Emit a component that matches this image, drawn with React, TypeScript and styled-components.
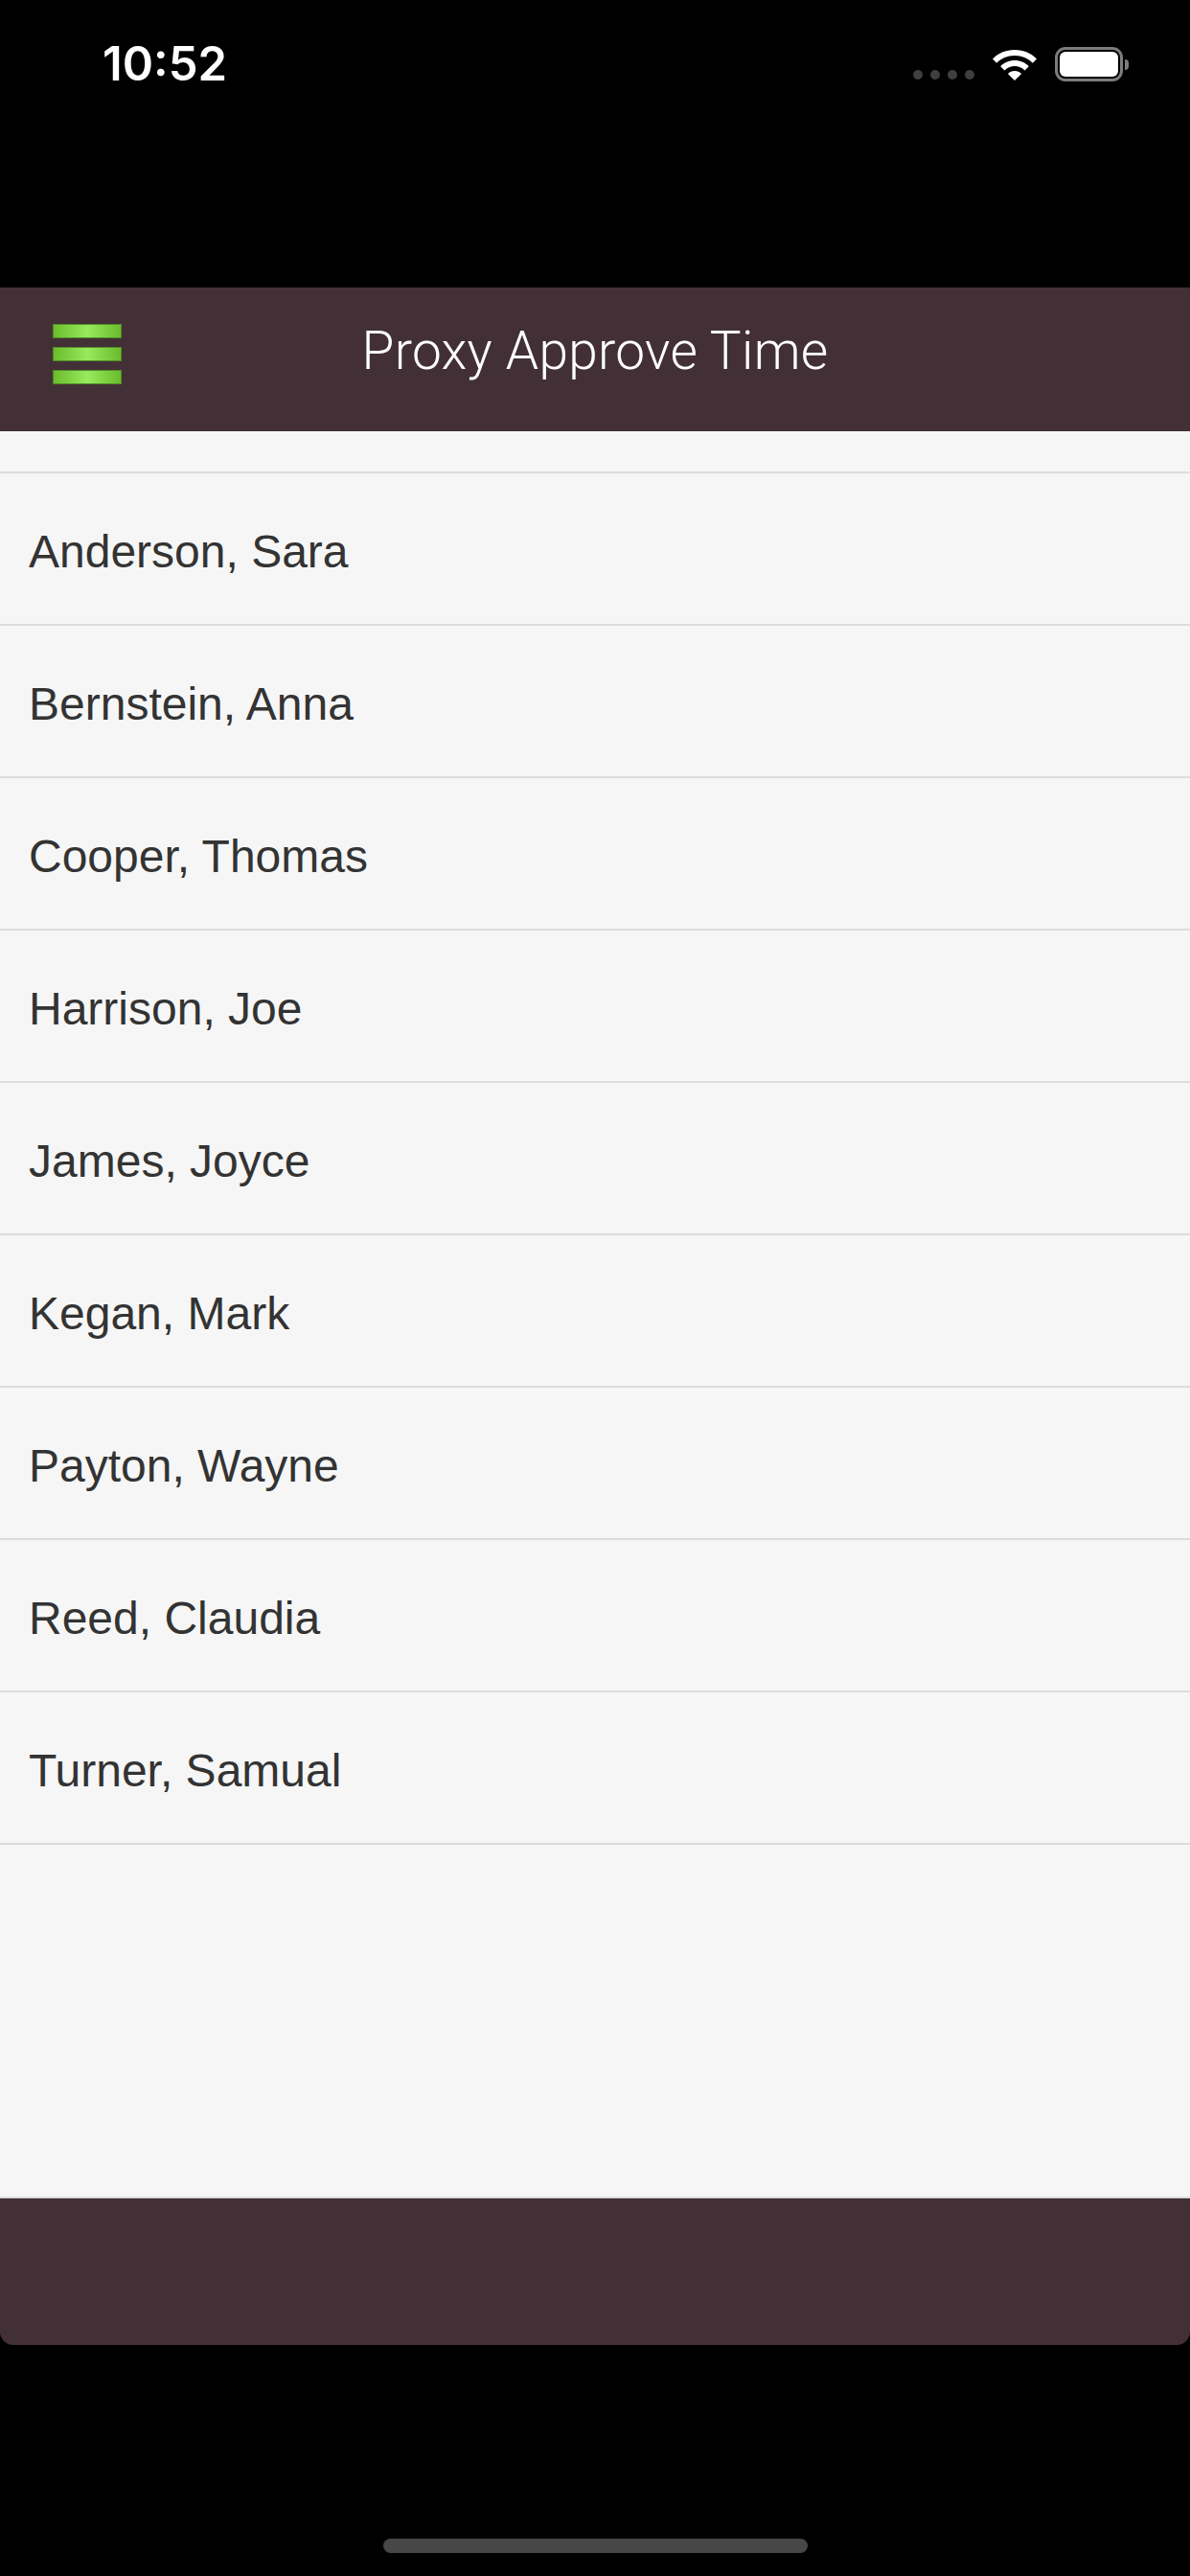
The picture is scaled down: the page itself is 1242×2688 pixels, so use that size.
import styled, { createGlobalStyle } from 'styled-components';

const people = [
  'Anderson, Sara',
  'Bernstein, Anna',
  'Cooper, Thomas',
  'Harrison, Joe',
  'James, Joyce',
  'Kegan, Mark',
  'Payton, Wayne',
  'Reed, Claudia',
  'Turner, Samual',
];

const GlobalStyle = createGlobalStyle`
  html, body {
    margin: 0;
    padding: 0;
    background: #000;
  }
  * {
    box-sizing: border-box;
  }
`;

const Screen = styled.div`
  width: 1242px;
  height: 2688px;
  display: flex;
  flex-direction: column;
  background: #000;
  overflow: hidden;
`;

const StatusBar = styled.div`
  height: 300px;
  flex-shrink: 0;
  display: flex;
  justify-content: space-between;
  align-items: flex-start;
  padding: 37px 64px 0 107px;
`;

const Clock = styled.span`
  font-family: Inter, 'Liberation Sans', sans-serif;
  font-weight: 600;
  font-size: 49px;
  color: #fff;
`;

const StatusIcons = styled.div`
  display: flex;
  align-items: center;
  gap: 17px;
  margin-top: 12px;
`;

const Dots = styled.div`
  display: flex;
  gap: 8px;
  margin-top: 22px;
`;

const Dot = styled.span`
  width: 10px;
  height: 10px;
  border-radius: 50%;
  background: #3f3f3f;
`;

const Battery = styled.div`
  position: relative;
  width: 71px;
  height: 36px;
  border: 3px solid #7c7c7c;
  border-radius: 11px;
  padding: 2px;
  margin-right: 6px;

  &::after {
    content: '';
    position: absolute;
    right: -9px;
    top: 10px;
    width: 4px;
    height: 11px;
    border-radius: 0 4px 4px 0;
    background: #7c7c7c;
  }
`;

const BatteryFill = styled.div`
  width: 100%;
  height: 100%;
  background: #fff;
  border-radius: 6px;
`;

const Header = styled.header`
  height: 150px;
  flex-shrink: 0;
  background: #433036;
  display: grid;
  grid-template-columns: 1fr auto 1fr;
  align-items: center;
  padding-bottom: 12px;
`;

const MenuButton = styled.div`
  display: flex;
  flex-direction: column;
  gap: 9px;
  margin-left: 55px;
`;

const MenuBar = styled.span`
  width: 72px;
  height: 15px;
  border: 1px solid #4f8b26;
  background: linear-gradient(90deg, #6abc2c 0%, #98ea5e 50%, #6abc2c 100%);
`;

const Title = styled.h1`
  margin: 0 0 6px;
  font-family: Roboto, 'Liberation Sans', sans-serif;
  font-weight: 300;
  font-size: 55px;
  color: #fff;
  letter-spacing: 0.3px;
`;

const List = styled.ul`
  flex: 1;
  margin: 0;
  padding: 0;
  list-style: none;
  background: #f6f6f6;
`;

const Spacer = styled.li`
  height: 44px;
  border-bottom: 2px solid #dcdcdc;
`;

const Row = styled.li`
  height: 159px;
  display: flex;
  align-items: center;
  padding: 6px 0 0 30px;
  border-bottom: 2px solid #dcdcdc;
  font-family: 'Liberation Sans', Arial, sans-serif;
  font-size: 48px;
  color: #333;
`;

const Footer = styled.footer`
  height: 155px;
  flex-shrink: 0;
  background: #433036;
  border-top: 2px solid #dcdcdc;
  border-radius: 0 0 14px 14px;
`;

const HomeArea = styled.div`
  height: 241px;
  flex-shrink: 0;
  display: flex;
  justify-content: center;
  padding-top: 202px;
`;

const HomeIndicator = styled.span`
  width: 443px;
  height: 15px;
  border-radius: 8px;
  background: #474747;
`;

const WifiIcon = () => (
  <svg width="50" height="36" viewBox="0 0 50 36">
    <path d="M25 3C15.5 3 7.5 6.8 2 12.5l4.2 4.3C10.8 12 17.5 9 25 9s14.2 3 18.8 7.8l4.2-4.3C42.5 6.8 34.5 3 25 3z" fill="#fff" />
    <path d="M25 14c-6 0-11.2 2.4-14.8 6.2l4.3 4.3C17.2 21.6 20.9 20 25 20s7.8 1.6 10.5 4.5l4.3-4.3C36.2 16.4 31 14 25 14z" fill="#fff" />
    <path d="M25 25c-2.9 0-5.4 1.1-7.1 3L25 35l7.1-7C30.4 26.1 27.9 25 25 25z" fill="#fff" />
  </svg>
);

export default function App() {
  return (
    <Screen>
      <GlobalStyle />
      <StatusBar>
        <Clock>10:52</Clock>
        <StatusIcons>
          <Dots>
            <Dot />
            <Dot />
            <Dot />
            <Dot />
          </Dots>
          <WifiIcon />
          <Battery>
            <BatteryFill />
          </Battery>
        </StatusIcons>
      </StatusBar>

      <Header>
        <MenuButton>
          <MenuBar />
          <MenuBar />
          <MenuBar />
        </MenuButton>
        <Title>Proxy Approve Time</Title>
        <div />
      </Header>

      <List>
        <Spacer />
        {people.map(name => (
          <Row key={name}>{name}</Row>
        ))}
      </List>

      <Footer />
      <HomeArea>
        <HomeIndicator />
      </HomeArea>
    </Screen>
  );
}
